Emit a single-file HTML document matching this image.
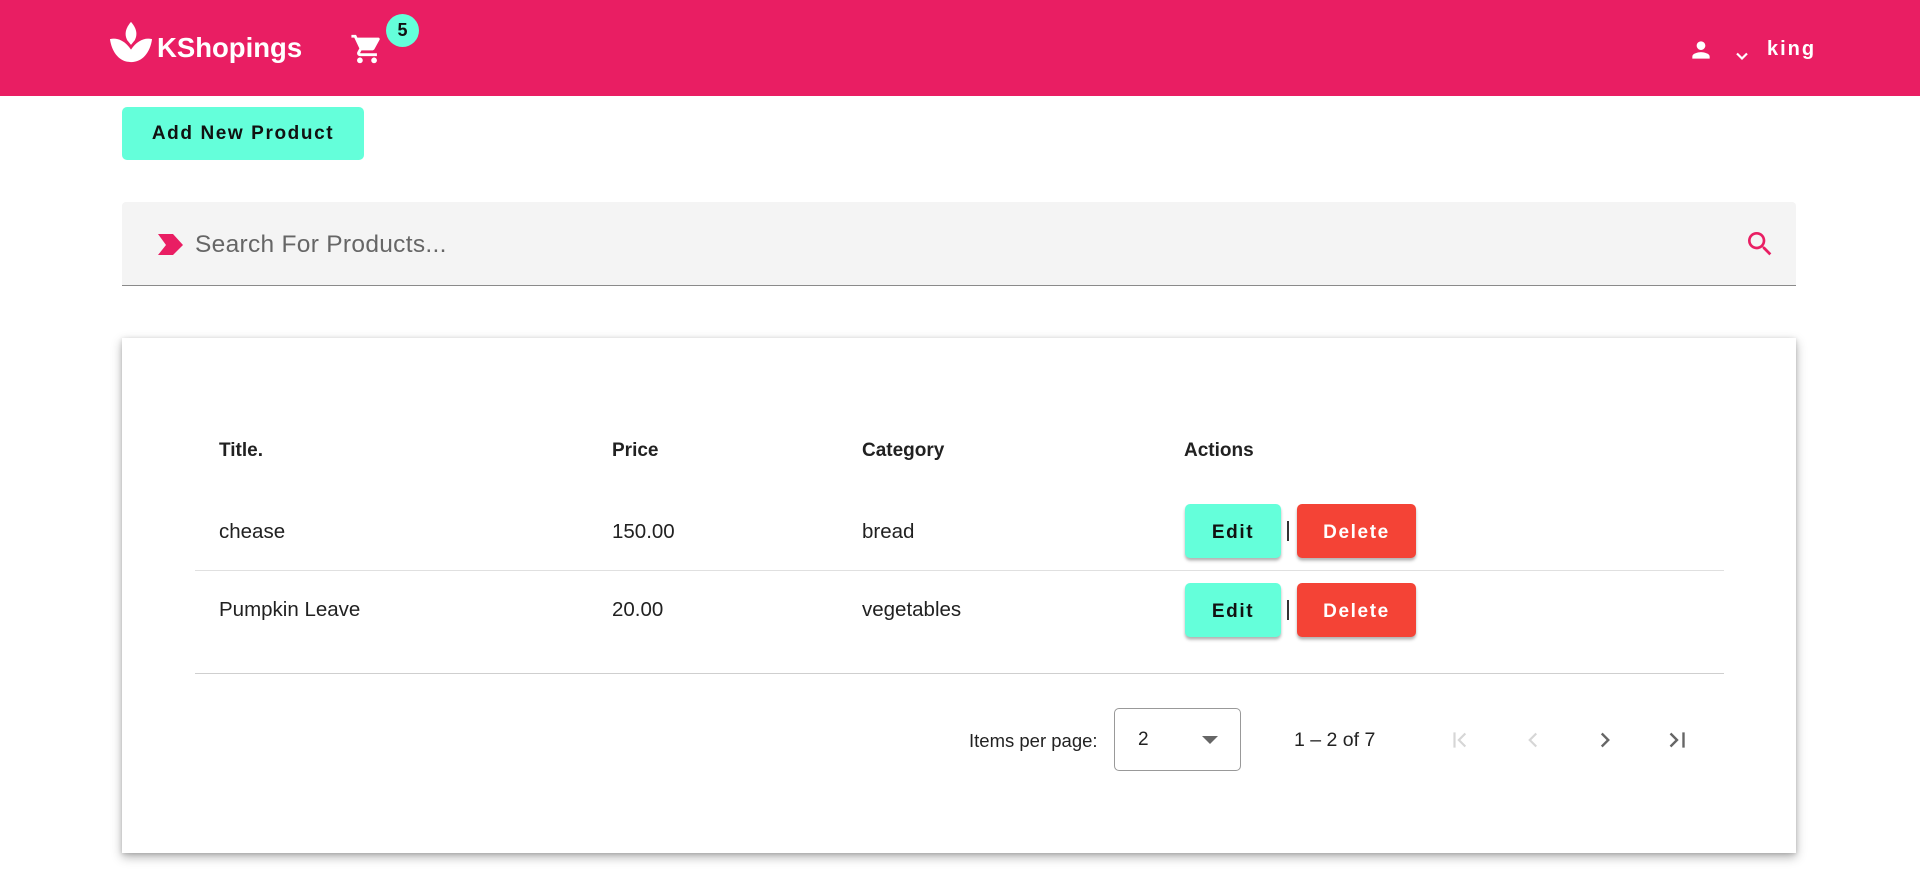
<!DOCTYPE html>
<html><head><meta charset="utf-8"><style>
*{box-sizing:border-box;margin:0;padding:0}
body{width:1920px;height:880px;background:#fff;font-family:"Liberation Sans",Arial,sans-serif;position:relative;overflow:hidden;color:#212121}
.abs{position:absolute}
.hdr{left:0;top:0;width:1920px;height:96px;background:#e91e63}
.btn{position:absolute;border-radius:5px;font-weight:bold;font-size:19px;letter-spacing:1.6px;display:flex;align-items:center;justify-content:center;box-shadow:0 3px 3px rgba(0,0,0,.2),0 2px 2px rgba(0,0,0,.12)}
.t{position:absolute;font-size:20.5px;line-height:24px}
.th{font-weight:bold;font-size:19px}
</style></head><body>
<div class="abs hdr"></div>
<svg class="abs" style="left:108px;top:20px" width="46" height="44" viewBox="0 0 48 46">
<path d="M24 2 C18 9 17 15 20 21 L24 26 L28 21 C31 15 30 9 24 2Z" fill="#fff"/>
<path d="M2 20 C10 18 18 22 24 31 C30 22 38 18 46 20 C44 34 36 44 24 44 C12 44 4 34 2 20Z" fill="#fff"/>
</svg>
<div class="abs" style="left:157px;top:31px;color:#fff;font-size:27.5px;font-weight:bold;line-height:34px">KShopings</div>
<svg class="abs" style="left:350px;top:32px" width="34" height="34" viewBox="0 0 24 24"><path fill="#fff" d="M7 18c-1.1 0-2 .9-2 2s.9 2 2 2 2-.9 2-2-.9-2-2-2zM1 2v2h2l3.6 7.59-1.35 2.45c-.16.28-.25.61-.25.96 0 1.1.9 2 2 2h12v-2H7.42c-.14 0-.25-.11-.25-.25l.03-.12.9-1.630h7.45c.75 0 1.41-.41 1.75-1.03l3.58-6.49A1 1 0 0 0 20 4H5.21l-.94-2H1zm16 16c-1.1 0-2 .9-2 2s.9 2 2 2 2-.9 2-2-.9-2-2-2z"/></svg>
<div class="abs" style="left:386px;top:14px;width:33px;height:33px;border-radius:50%;background:#64ffda;color:#111;font-weight:bold;font-size:18px;line-height:33px;text-align:center">5</div>
<svg class="abs" style="left:1688px;top:37px" width="26" height="26" viewBox="0 0 24 24"><path fill="#fff" d="M12 12c2.2 0 4-1.8 4-4s-1.8-4-4-4-4 1.8-4 4 1.8 4 4 4zm0 2c-2.7 0-8 1.3-8 4v2h16v-2c0-2.7-5.3-4-8-4z"/></svg>
<svg class="abs" style="left:1732px;top:46px" width="20" height="20" viewBox="0 0 24 24"><path fill="none" stroke="#fff" stroke-width="2.6" d="M6 9l6 6 6-6"/></svg>
<div class="abs" style="left:1767px;top:38px;color:#fff;font-size:20px;font-weight:bold;letter-spacing:2px">king</div>

<div class="btn" style="left:122px;top:107px;width:242px;height:53px;background:#64ffda;color:#111;box-shadow:none">Add New Product</div>

<div class="abs" style="left:122px;top:202px;width:1674px;height:84px;background:#f4f4f4;border-bottom:1.5px solid #8a8a8a;border-radius:4px 4px 0 0"></div>
<svg class="abs" style="left:158px;top:234px" width="26" height="22" viewBox="0 0 26 22"><path d="M0 0H15L25 11 15 21H0L8 11Z" fill="#e91e63"/></svg>
<div class="abs" style="left:195px;top:230px;font-size:24.5px;color:#666;line-height:30px;letter-spacing:.3px">Search For Products...</div>
<svg class="abs" style="left:1744px;top:228px" width="32" height="32" viewBox="0 0 24 24"><path fill="#e91e63" d="M15.5 14h-.79l-.28-.27A6.47 6.47 0 0 0 16 9.5 6.5 6.5 0 1 0 9.5 16c1.61 0 3.09-.59 4.230-1.57l.27.28v.79l5 4.99L20.49 19l-4.99-5zm-6 0C7.01 14 5 11.99 5 9.5S7.01 5 9.5 5 14 7.01 14 9.5 11.99 14 9.5 14z"/></svg>

<div class="abs" style="left:122px;top:338px;width:1674px;height:515px;background:#fff;box-shadow:0 4px 10px rgba(0,0,0,.3),0 1px 4px rgba(0,0,0,.15)"></div>
<div class="t th" style="left:219px;top:439px">Title.</div>
<div class="t th" style="left:612px;top:439px">Price</div>
<div class="t th" style="left:862px;top:439px">Category</div>
<div class="t th" style="left:1184px;top:439px">Actions</div>
<div class="t" style="left:219px;top:520px">chease</div>
<div class="t" style="left:612px;top:520px">150.00</div>
<div class="t" style="left:862px;top:520px">bread</div>
<div class="abs" style="left:195px;top:570px;width:1529px;height:1px;background:#e0e0e0"></div>
<div class="t" style="left:219px;top:598px">Pumpkin Leave</div>
<div class="t" style="left:612px;top:598px">20.00</div>
<div class="t" style="left:862px;top:598px">vegetables</div>
<div class="abs" style="left:195px;top:673px;width:1529px;height:1px;background:#cfcfcf"></div>

<div class="btn" style="left:1185px;top:504px;width:96px;height:54px;background:#64ffda;color:#111;padding-top:3px">Edit</div>
<div class="abs" style="left:1287px;top:521px;width:2px;height:20px;background:#333"></div>
<div class="btn" style="left:1297px;top:504px;width:119px;height:54px;background:#f44336;color:#fff;padding-top:3px">Delete</div>
<div class="btn" style="left:1185px;top:583px;width:96px;height:54px;background:#64ffda;color:#111;padding-top:3px">Edit</div>
<div class="abs" style="left:1287px;top:600px;width:2px;height:20px;background:#333"></div>
<div class="btn" style="left:1297px;top:583px;width:119px;height:54px;background:#f44336;color:#fff;padding-top:3px">Delete</div>

<div class="abs" style="left:969px;top:730px;font-size:18.5px;color:#222">Items per page:</div>
<div class="abs" style="left:1114px;top:708px;width:127px;height:63px;border:1px solid #999;border-radius:5px"></div>
<div class="abs" style="left:1138px;top:729px;font-size:19px;color:#222">2</div>
<svg class="abs" style="left:1202px;top:736px" width="16" height="9"><path d="M0 0H16L8 8Z" fill="#666"/></svg>
<div class="abs" style="left:1294px;top:729px;font-size:19.5px;color:#222">1 – 2 of 7</div>
<svg class="abs" style="left:1448px;top:727px" width="26" height="26" viewBox="0 0 24 24"><path fill="none" stroke="#d6d6d6" stroke-width="2" d="M6 5v14M16 6l-6 6 6 6"/></svg>
<svg class="abs" style="left:1520px;top:727px" width="26" height="26" viewBox="0 0 24 24"><path fill="none" stroke="#d6d6d6" stroke-width="2" d="M15 6l-6 6 6 6"/></svg>
<svg class="abs" style="left:1592px;top:727px" width="26" height="26" viewBox="0 0 24 24"><path fill="none" stroke="#666" stroke-width="2.2" d="M9 6l6 6-6 6"/></svg>
<svg class="abs" style="left:1664px;top:727px" width="26" height="26" viewBox="0 0 24 24"><path fill="none" stroke="#666" stroke-width="2.2" d="M6 6l6 6-6 6M18 5v14"/></svg>
</body></html>
